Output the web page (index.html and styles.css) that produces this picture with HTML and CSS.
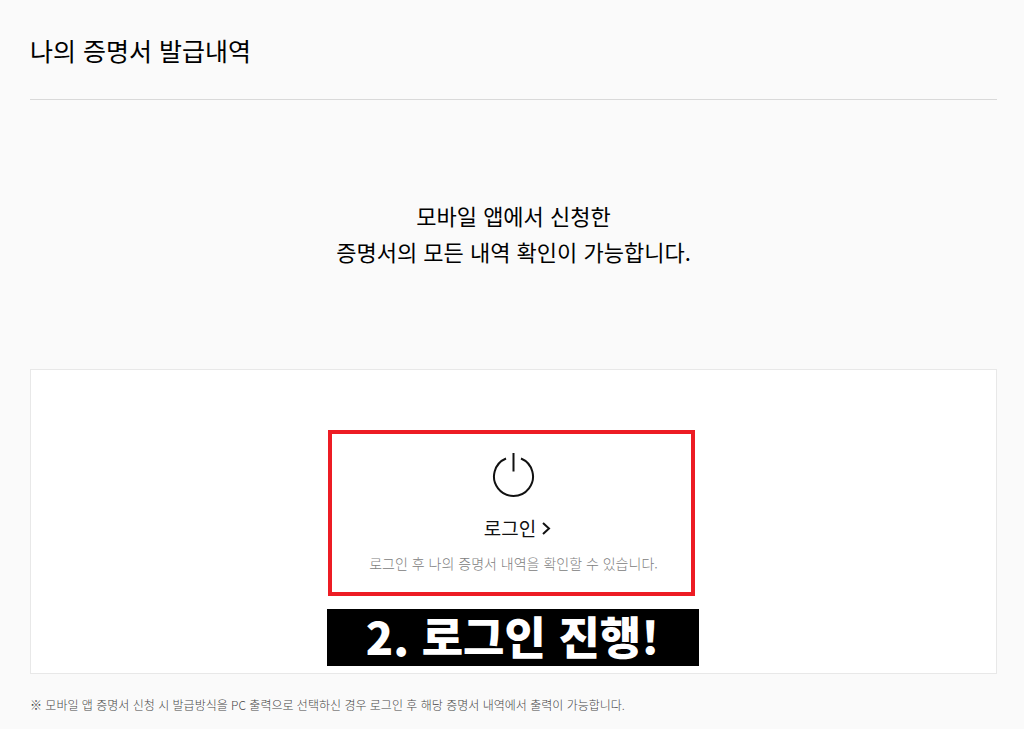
FILE: index.html
```html
<!DOCTYPE html>
<html lang="ko">
<head>
<meta charset="utf-8">
<meta name="viewport" content="width=device-width, initial-scale=1">
<title>나의 증명서 발급내역</title>
<link rel="stylesheet" href="styles.css">
</head>
<body>
<main class="page">
  <h1 class="title">나의 증명서 발급내역</h1>
  <p class="intro">모바일 앱에서 신청한<br>증명서의 모든 내역 확인이 가능합니다.</p>
  <section class="panel">
    <div class="login-box">
      <svg class="power" viewBox="0 0 44 46" aria-hidden="true"><path d="M14 6.500A19.500 19.500 0 1 0 29 6.500M21.500 1V19.500"/></svg>
      <a class="login-link" href="#">로그인<svg class="chevron" viewBox="0 0 10 14" aria-hidden="true"><path d="M2 2L8 7.500L2 13"/></svg></a>
      <p class="hint">로그인 후 나의 증명서 내역을 확인할 수 있습니다.</p>
    </div>
    <p class="step">2. 로그인 진행!</p>
  </section>
  <p class="note">※ 모바일 앱 증명서 신청 시 발급방식을 PC 출력으로 선택하신 경우 로그인 후 해당 증명서 내역에서 출력이 가능합니다.</p>
</main>
</body>
</html>
```
FILE: styles.css
```css
* {
  box-sizing: border-box;
}

body {
  margin: 0;
  background: #fafafa;
  color: #000;
  font-family: "Noto Sans CJK KR", sans-serif;
}

.page {
  padding: 31px 27px 0 30px;
}

.title {
  margin: 0;
  padding-bottom: 30px;
  border-bottom: 1px solid #d9d9d9;
  font-size: 25px;
  font-weight: 400;
  line-height: 38px;
}

.intro {
  margin: 97px 0 100px;
  font-size: 22px;
  line-height: 36px;
  text-align: center;
}

.panel {
  display: flex;
  flex-direction: column;
  align-items: center;
  padding: 60px 18px 7px 16px;
  border: 1px solid #e8e8e8;
  background: #fff;
}

.login-box {
  display: flex;
  flex-direction: column;
  align-items: center;
  width: 367px;
  max-width: 100%;
  margin-right: 2px;
  padding: 18px 0 18px 4px;
  border: 4px solid #ed1c24;
}

.power {
  width: 44px;
  height: 46px;
  fill: none;
  stroke: #111;
  stroke-width: 2;
}

.login-link {
  display: flex;
  align-items: center;
  gap: 5px;
  margin-top: 16px;
  padding-left: 8px;
  color: #111;
  font-size: 19px;
  line-height: 28px;
  text-decoration: none;
}

.chevron {
  width: 10px;
  height: 14px;
  fill: none;
  stroke: #111;
  stroke-width: 2;
}

.hint {
  margin: 11px 0 0;
  color: #808080;
  font-size: 14px;
  font-weight: 300;
  line-height: 21px;
}

.step {
  width: 372px;
  max-width: 100%;
  margin: 13px 0 0;
  padding-bottom: 4px;
  background: #000;
  color: #fff;
  font-size: 45px;
  font-weight: 900;
  line-height: 53px;
  text-align: center;
}

.note {
  margin: 21px 0 0;
  color: #484848;
  font-size: 12px;
  font-weight: 300;
  line-height: 20px;
}
```
